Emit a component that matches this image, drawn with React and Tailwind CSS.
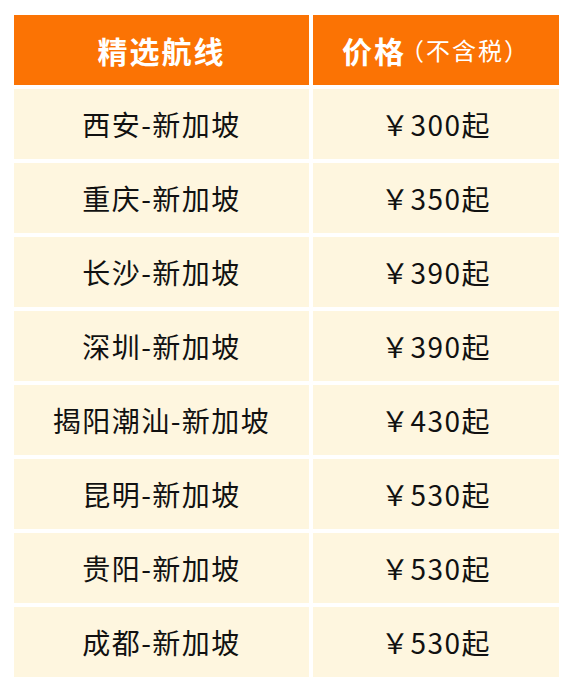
import React from 'react';

const routes = [
  { name: '西安-新加坡', price: '300' },
  { name: '重庆-新加坡', price: '350' },
  { name: '长沙-新加坡', price: '390' },
  { name: '深圳-新加坡', price: '390' },
  { name: '揭阳潮汕-新加坡', price: '430' },
  { name: '昆明-新加坡', price: '530' },
  { name: '贵阳-新加坡', price: '530' },
  { name: '成都-新加坡', price: '530' },
];

const App = () => {
  return (
    <div
      className="min-h-[692px] w-[574px] bg-white pt-[15px] pl-[14px]"
      style={{ fontFamily: '"Noto Sans CJK SC", "Noto Sans", sans-serif' }}
    >
      <div className="grid grid-cols-[295px_246px] gap-[4px]">
        <div className="flex h-[70px] items-center justify-center bg-[#fb7304] text-[30px] font-bold tracking-[2px] text-white">
          精选航线
        </div>
        <div className="flex h-[70px] items-center justify-center bg-[#fb7304] text-white">
          <span className="text-[30px] font-bold tracking-[2px]">价格</span>
          <span className="ml-[-6px] text-[24px] tracking-[2px]">（不含税）</span>
        </div>

        {routes.map((route) => (
          <React.Fragment key={route.name}>
            <div className="flex h-[70px] items-center justify-center bg-[#fef6df] text-[28px] tracking-[1.5px] text-[#111]">
              {route.name}
            </div>
            <div className="flex h-[70px] items-center justify-center bg-[#fef6df] text-[28px] tracking-[1.5px] text-[#111]">
              ￥{route.price}起
            </div>
          </React.Fragment>
        ))}
      </div>
    </div>
  );
};

export default App;
